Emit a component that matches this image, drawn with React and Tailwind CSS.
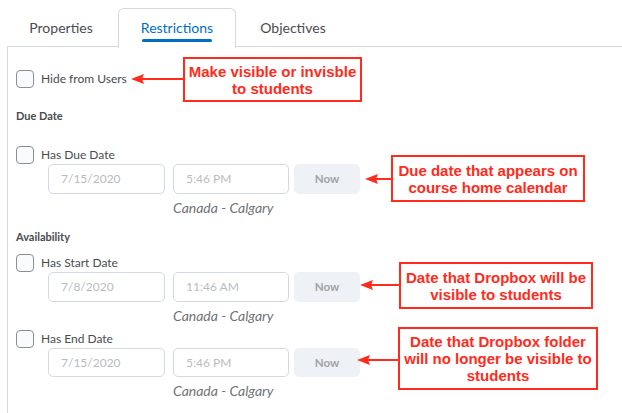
import React from "react";

const RED = "#ff2b1c";

function Checkbox({ label }) {
  return (
    <div className="flex items-center h-[18px]">
      <div className="w-[18px] h-[18px] rounded-[4px] border border-[#8a9096] bg-[#f9fbff]" />
      <span className="ml-[7px] text-[12px] text-[#494c4e] leading-none">{label}</span>
    </div>
  );
}

function DateRow({ date, time, h = 30 }) {
  return (
    <div className="pl-[32px]">
      <div className="flex items-center" style={{ height: h }}>
        <div className="w-[117px] h-full rounded-[5px] border border-[#d3d9e3] flex items-center pl-[12px] text-[12px] text-[#b9bcbf]">
          {date}
        </div>
        <div className="ml-[8px] w-[116px] h-full rounded-[5px] border border-[#d3d9e3] flex items-center pl-[12px] text-[12px] text-[#b9bcbf]">
          {time}
        </div>
        <div className="ml-[5px] w-[66px] h-full rounded-[5px] bg-[#eef1f5] flex items-center justify-center text-[11.5px] font-bold text-[#9ea3a7]">
          Now
        </div>
      </div>
      <div className="pl-[125px] h-[26px] flex items-center text-[14px] italic text-[#6e7376]">
        Canada - Calgary
      </div>
    </div>
  );
}

function Callout({ x, y, w, h, lines, arrowTo, arrowY }) {
  return (
    <>
      <div
        className="absolute border-2 border-[#ff2b1c] bg-white flex flex-col items-center justify-center text-[15px] font-bold text-[#ff2b1c] leading-[17px] text-center"
        style={{ left: x, top: y, width: w, height: h, fontFamily: '"Liberation Sans", Arial, sans-serif' }}
      >
        {lines.map((l) => (
          <div key={l}>{l}</div>
        ))}
      </div>
      <svg
        className="absolute"
        style={{ left: arrowTo, top: arrowY - 6, width: x - arrowTo + 1, height: 12 }}
        viewBox={`0 0 ${x - arrowTo + 1} 12`}
      >
        <line x1="8" y1="6" x2={x - arrowTo + 1} y2="6" stroke={RED} strokeWidth="2" />
        <polygon points="0,6 13,1 11,6 13,11" fill={RED} />
      </svg>
    </>
  );
}

export default function App() {
  return (
    <div
      className="relative w-[622px] h-[413px] overflow-hidden bg-white"
      style={{ fontFamily: "Lato, 'Open Sans', sans-serif" }}
    >
      {/* Tabs */}
      <div className="flex h-[47px] pt-[8px] pl-[4px]">
        <div className="w-[114px] flex items-center justify-center text-[14px] text-[#494c4e]">
          Properties
        </div>
        <div className="relative z-10 w-[118px] h-[40px] rounded-t-[6px] border border-b-0 border-[#d3d9e3] bg-white flex flex-col items-center justify-center">
          <span className="text-[14px] text-[#006fbf] mt-[1px]">Restrictions</span>
          <div className="w-[70px] h-[3px] rounded-full bg-[#006fbf] mt-[1px]" />
        </div>
        <div className="w-[114px] flex items-center justify-center text-[14px] text-[#494c4e]">
          Objectives
        </div>
      </div>

      {/* Panel */}
      <div className="ml-[7px] -mt-[1px] border-l border-t border-[#d3d9e3] h-[400px] pl-[8px] pt-[23px]">
        <Checkbox label="Hide from Users" />

        <div className="mt-[21px] h-[14px] flex items-center text-[11px] font-bold text-[#494c4e]">
          Due Date
        </div>

        <div className="mt-[23px]">
          <Checkbox label="Has Due Date" />
          <DateRow date="7/15/2020" time="5:46 PM" />
        </div>

        <div className="mt-[10px] h-[14px] flex items-center text-[11px] font-bold text-[#494c4e]">
          Availability
        </div>

        <div className="mt-[10px]">
          <Checkbox label="Has Start Date" />
          <DateRow date="7/8/2020" time="11:46 AM" />
        </div>

        <div className="mt-[2px]">
          <Checkbox label="Has End Date" />
          <DateRow date="7/15/2020" time="5:46 PM" h={29} />
        </div>
      </div>

      {/* Annotations */}
      <Callout x={183} y={57} w={179} h={45} lines={["Make visible or invisble", "to students"]} arrowTo={131} arrowY={79} />
      <Callout x={391} y={155} w={194} h={47} lines={["Due date that appears on", "course home calendar"]} arrowTo={365} arrowY={179} />
      <Callout x={399} y={262} w={194} h={47} lines={["Date that Dropbox will be", "visible to students"]} arrowTo={360} arrowY={285} />
      <Callout x={398} y={327} w={200} h={63} lines={["Date that Dropbox folder", "will no longer be visible to", "students"]} arrowTo={357} arrowY={360} />
    </div>
  );
}
